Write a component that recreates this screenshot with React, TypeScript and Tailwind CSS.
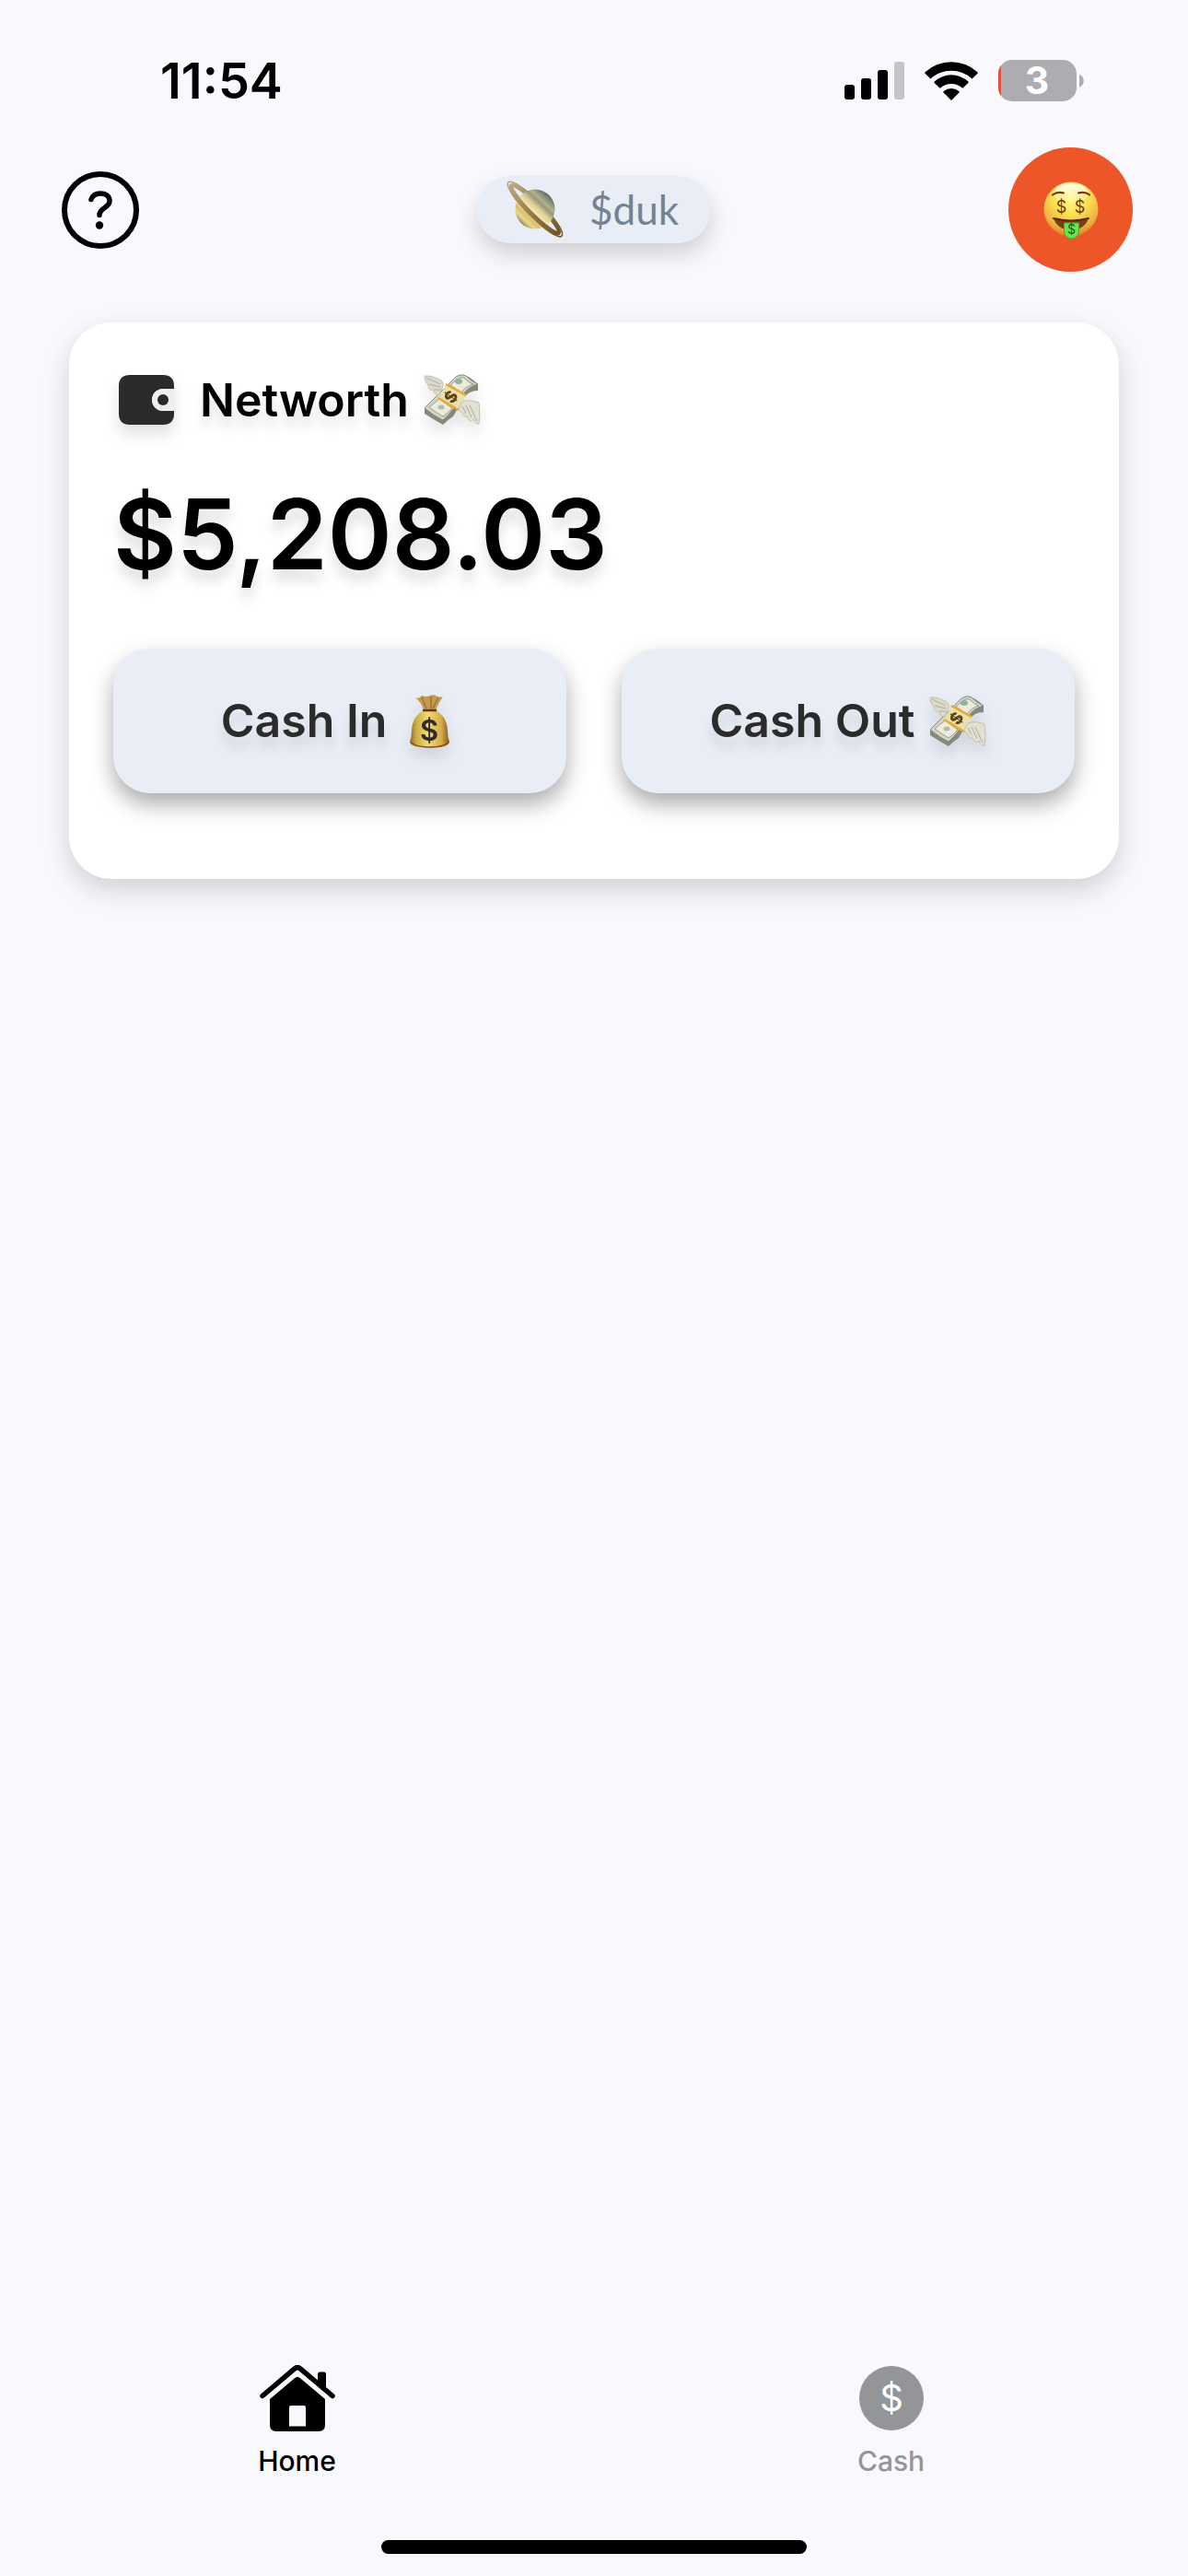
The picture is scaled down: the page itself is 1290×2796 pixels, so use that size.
import type { ReactNode } from 'react'

const tabs = [
  { id: 'home', label: 'Home', href: '#home', icon: <HomeIcon />, color: 'text-black' },
  { id: 'cash', label: 'Cash', href: '#cash', icon: <CashIcon />, color: 'text-[#949599]' },
]

function SignalIcon() {
  return (
    <svg className="h-[42px] w-[65px]" viewBox="0 0 65 42" aria-label="Signal">
      <rect x="0" y="25" width="11" height="16" rx="3" />
      <rect x="18" y="18" width="11" height="23" rx="3" />
      <rect x="36" y="9" width="11" height="32" rx="3" />
      <rect x="54" y="0" width="11" height="41" rx="3" fill="#c5c4ca" />
    </svg>
  )
}

function WifiIcon() {
  return (
    <svg className="h-[42px] w-[58px]" viewBox="0 0 58 42" aria-label="Wi-Fi">
      <path d="M6.500 18.500 L0.600 12.800 Q-0.200 12 0.600 11.200 A42 42 0 0 1 57.400 11.200 Q58.200 12 57.400 12.800 L51.500 18.500 A33 33 0 0 0 6.500 18.500Z" />
      <path d="M16.700 28.700 L10.600 23 Q10 22.200 10.700 21.500 A27 27 0 0 1 47.300 21.500 Q48 22.200 47.400 23 L41.300 28.700 A18.500 18.500 0 0 0 16.700 28.700Z" />
      <path d="M29 42 L20.600 33.600 Q20 32.800 20.700 32.100 A13 13 0 0 1 37.300 32.100 Q38 32.800 37.400 33.600Z" />
    </svg>
  )
}

function BatteryIcon() {
  return (
    <svg className="h-[46px] w-[94px] overflow-visible" viewBox="0 0 94 46" aria-label="Battery 3%">
      <defs>
        <clipPath id="battery-shell">
          <rect x="0" y="0" width="85" height="45" rx="15" />
        </clipPath>
      </defs>
      <g clipPath="url(#battery-shell)">
        <rect width="85" height="45" fill="#adacb1" />
        <rect width="3" height="45" fill="#eb4d3d" />
      </g>
      <path d="M88 16 A7.200 7.200 0 0 1 88 29.500Z" fill="#adacb1" />
      <text x="42" y="37" textAnchor="middle" fontSize="41" fontWeight="700" fill="#fff">3</text>
    </svg>
  )
}

function HelpIcon() {
  return (
    <svg className="size-[84px]" viewBox="0 0 84 84" fill="none" stroke="#000" strokeLinecap="round" strokeLinejoin="round">
      <circle cx="42" cy="42" r="39" strokeWidth="6" />
      <path d="M32 30.500 C33.500 26 37 24 42 24 C48.500 24 52 27.500 52 32 C52 40 41 39 41 47.500" strokeWidth="5.500" />
      <circle cx="41" cy="58.500" r="4.200" fill="#000" stroke="none" />
    </svg>
  )
}

function PlanetEmoji() {
  return (
    <svg className="size-[62px]" viewBox="0 0 62 62" aria-label="planet">
      <defs>
        <linearGradient id="planet" x1="0.900" y1="0.100" x2="0.150" y2="0.900">
          <stop offset="0" stopColor="#4d5650" />
          <stop offset="0.140" stopColor="#7f8778" />
          <stop offset="0.260" stopColor="#b5b187" />
          <stop offset="0.340" stopColor="#97997f" />
          <stop offset="0.460" stopColor="#dfd196" />
          <stop offset="0.620" stopColor="#f6ecb4" />
          <stop offset="0.760" stopColor="#dcbe68" />
          <stop offset="0.860" stopColor="#e9d78c" />
          <stop offset="1" stopColor="#827a4c" />
        </linearGradient>
        <linearGradient id="ring" x1="0" y1="0" x2="1" y2="0">
          <stop offset="0" stopColor="#baa97c" />
          <stop offset="0.500" stopColor="#927a46" />
          <stop offset="1" stopColor="#735628" />
        </linearGradient>
      </defs>
      <g transform="rotate(45 31 31)" fill="none" stroke="url(#ring)">
        <ellipse cx="31" cy="31" rx="41" ry="8.500" strokeWidth="1.500" />
        <ellipse cx="31" cy="31" rx="36.500" ry="6" strokeWidth="4" />
      </g>
      <circle cx="31" cy="31" r="21.500" fill="url(#planet)" />
      <g transform="rotate(45 31 31)" fill="none" stroke="url(#ring)">
        <path d="M-10 31 A41 8.500 0 0 0 72 31" strokeWidth="1.500" />
        <path d="M-5.500 31 A36.500 6 0 0 0 67.500 31" strokeWidth="4" />
      </g>
    </svg>
  )
}

function MoneyFaceEmoji() {
  return (
    <svg className="size-[62px]" viewBox="0 0 62 62" aria-label="money face">
      <defs>
        <radialGradient id="face" cx="0.500" cy="0.280" r="0.720">
          <stop offset="0" stopColor="#fff98a" />
          <stop offset="0.450" stopColor="#fbe150" />
          <stop offset="0.800" stopColor="#f0b040" />
          <stop offset="1" stopColor="#d98a24" />
        </radialGradient>
        <linearGradient id="shine" x1="0" y1="0" x2="0" y2="1">
          <stop offset="0" stopColor="#fffef0" />
          <stop offset="1" stopColor="#fffef0" stopOpacity="0" />
        </linearGradient>
      </defs>
      <circle cx="31" cy="30" r="29.500" fill="url(#face)" />
      <ellipse cx="31" cy="13" rx="19" ry="11" fill="url(#shine)" />
      <path d="M11 14.500 Q16 10.500 23 12.500 M39 12.500 Q46 10.500 51 14.500" fill="none" stroke="#6e3c0c" strokeWidth="2.200" strokeLinecap="round" />
      <path d="M12 40 Q31 45 50 40 Q46 52 31 53 Q16 52 12 40Z" fill="#7a3f12" />
      <path d="M12 40 Q31 45 50 40" fill="none" stroke="#5a2c08" strokeWidth="2" strokeLinecap="round" />
      <path d="M23.500 45 H39.500 V54 A8 8 0 0 1 23.500 54Z" fill="#6be352" stroke="#3fae2c" strokeWidth="1" />
      <g fill="#6e3c0c" textAnchor="middle">
        <text x="20.500" y="34" fontSize="18">$</text>
        <text x="40.500" y="34" fontSize="18">$</text>
        <text x="31.500" y="57" fontSize="14" fill="#1f5c1c">$</text>
      </g>
    </svg>
  )
}

function FlyingMoneyEmoji() {
  return (
    <svg className="h-[56px] w-[62px] shrink-0" viewBox="0 0 62 56" aria-label="money with wings">
      {/* bill stack */}
      <path d="M1 38 L40 1 Q48 0 59 11 V18 Q48 18 43 27 L32 46 Q27 49 21 55 Q12 50 1 43Z" fill="#85897d" />
      <path d="M1 37 L34 4 Q40 -1 46 2 Q52 8 59 11 Q48 14 43 22 L32 38 Q27 45 21 50 Q12 46 1 37Z" fill="#d3d5c6" stroke="#858a7c" strokeWidth="1" />
      <path d="M6 36 L17 27 L31 37 Q27 42 21 46 Q14 42 6 36Z M29 12 L36 6 Q41 2 45 5 Q48 9 54 11 Q46 13 41 20Z" fill="#ecebdc" stroke="#989d8d" strokeWidth="1" />
      <ellipse cx="38" cy="8" rx="4" ry="3" fill="#8eb49a" />
      <ellipse cx="19" cy="36" rx="3.500" ry="2.500" fill="#b5b9a8" />
      {/* band */}
      <path d="M24 12 L46 24 L38 39 L16 26Z" fill="#eadfae" />
      <path d="M24 11 L46 23 M16 26 L38 39" stroke="#e8ab28" strokeWidth="2.500" />
      <text x="30" y="31" fontSize="18" fontWeight="800" fill="#5e4312" textAnchor="middle" transform="rotate(-55 30 25)">$</text>
      {/* wings */}
      <path d="M1 2 Q8 1 15 5 Q22 7 21 13 Q19 18 17 23 Q11 22 11 18 Q5 18 5 12 Q1 9 1 2Z" fill="#dcdacd" stroke="#c2c0b2" strokeWidth="1" />
      <path d="M3 4 L18 11 M6 11 L18 14 M11 17 L18 17" stroke="#b0aea1" strokeWidth="1" />
      <path d="M42 30 Q50 27 60 31 Q62 42 60 54 Q56 55 54 49 Q51 54 47 46 Q43 47 42 42 Q38 40 38 37Z" fill="#e2e0d3" stroke="#c2c0b2" strokeWidth="1" />
      <path d="M50 34 L58 51 M46 34 L52 47 M42 35 L46 43" stroke="#b0aea1" strokeWidth="1" />
    </svg>
  )
}

function MoneyBagEmoji() {
  return (
    <svg className="h-[58px] w-[62px] shrink-0" viewBox="-9 0 62 58" aria-label="money bag">
      <defs>
        <linearGradient id="bag" x1="0" y1="0" x2="1" y2="0">
          <stop offset="0" stopColor="#8f6420" />
          <stop offset="0.150" stopColor="#caa843" />
          <stop offset="0.450" stopColor="#f0dc72" />
          <stop offset="0.800" stopColor="#d3ac48" />
          <stop offset="1" stopColor="#83561b" />
        </linearGradient>
      </defs>
      <path d="M6 3 Q10 5 13 1 Q18 3 22 1 Q27 -1 30 2 Q34 3 36 2 Q31 9 28 17 H15 Q13 9 6 3Z" fill="#c49a50" />
      <path d="M13 3 L18 15 M23 2 V15 M31 3 L25 15" stroke="#9a6c30" strokeWidth="1.200" />
      <path d="M15 17 H28 Q40 23 41 39 Q41 46 43 51 Q42 58 21.500 58 Q1 58 0 51 Q2 46 2 39 Q3 23 15 17Z" fill="url(#bag)" />
      <path d="M15 17 H28" stroke="#633512" strokeWidth="2.500" strokeLinecap="round" />
      <path d="M1 52 Q8 57 22 57 Q36 57 42 52" fill="none" stroke="#7a4a16" strokeWidth="1.500" />
      <text x="21" y="50" fontSize="31" fontWeight="600" fill="#33292b" textAnchor="middle">$</text>
    </svg>
  )
}

function WalletIcon() {
  return (
    <svg className="h-[54px] w-[60px] drop-shadow-[0_10px_8px_rgba(0,0,0,0.12)]" viewBox="0 0 60 54" aria-hidden="true">
      <path d="M12 0 H48 Q60 0 60 12 V15 H48 A12 12 0 0 0 48 39 H60 V42 Q60 54 48 54 H12 Q0 54 0 42 V12 Q0 0 12 0Z" fill="#2b2b2b" />
      <path d="M60 15 H48 A12 12 0 0 0 48 39 H60Z" fill="#efefef" />
      <circle cx="48" cy="27" r="6" fill="#2b2b2b" />
    </svg>
  )
}

function HomeIcon() {
  return (
    <svg className="h-[72px] w-[82px]" viewBox="0 0 82 72" aria-hidden="true">
      <path d="M3 33.500 L38 3.800 Q41 1.400 44 3.800 L79 33.500" fill="none" stroke="#000" strokeWidth="5.500" strokeLinecap="round" strokeLinejoin="round" />
      <path d="M63 20 V10 Q63 7.500 65.500 7.500 H69.500 Q72 7.500 72 10 V28Z" />
      <path fillRule="evenodd" d="M11 37 L38 14.200 Q41 11.800 44 14.200 L71 37 V65 Q71 72 64 72 H18 Q11 72 11 65Z M32 46 V66.500 H50 V46 Q50 44 48 44 H34 Q32 44 32 46Z" />
    </svg>
  )
}

function CashIcon() {
  return (
    <svg className="h-[72px] w-[70px]" viewBox="0 0 70 72" aria-hidden="true">
      <circle cx="35" cy="36" r="35" fill="#949599" />
      <text x="35" y="50" fontSize="40" fill="#fff" textAnchor="middle">$</text>
    </svg>
  )
}

function CashButton({ label, children }: { label: string; children: ReactNode }) {
  return (
    <button
      type="button"
      className="flex h-[157px] flex-1 items-center justify-center gap-4 rounded-[40px] bg-[#e9edf5] text-[50px] font-semibold text-[#2b2b2b] shadow-[0_12px_24px_rgba(0,0,0,0.33)]"
    >
      <span className="text-shadow-[0_12px_12px_rgba(0,0,0,0.1)]">{label}</span>
      <span className="drop-shadow-[0_10px_8px_rgba(0,0,0,0.1)]">{children}</span>
    </button>
  )
}

export default function App() {
  return (
    <div className="flex min-h-screen flex-col bg-[#f8f8fd] font-['Inter',sans-serif] text-black">
      {/* Status bar */}
      <div className="flex items-center justify-between pt-14 pr-[112px] pl-[174px]">
        <time className="text-[54px] leading-[64px] font-semibold">11:54</time>
        <div className="flex items-center gap-[22px]">
          <SignalIcon />
          <WifiIcon />
          <BatteryIcon />
        </div>
      </div>

      {/* Header */}
      <header className="mt-10 grid grid-cols-3 items-center px-[60px]">
        <button type="button" aria-label="Help" className="justify-self-start pl-[7px]">
          <HelpIcon />
        </button>
        <button
          type="button"
          className="flex h-[73px] w-[254px] items-center gap-7 justify-self-center rounded-full bg-[#e9edf5] pb-0.5 pl-8 font-['Lato',sans-serif] text-[44px] text-[#728494] shadow-[0_12px_24px_rgba(0,0,0,0.16)]"
        >
          <PlanetEmoji />
          $duk
        </button>
        <button
          type="button"
          aria-label="Profile"
          className="flex size-[135px] items-center justify-center justify-self-end rounded-full bg-[#ec5628]"
        >
          <MoneyFaceEmoji />
        </button>
      </header>

      <main className="flex-1 px-[75px] pt-[55px]">
        <section className="rounded-[46px] bg-white px-12 pt-[52px] pb-[93px] shadow-[0_12px_30px_rgba(0,0,0,0.16)]">
          <div className="flex items-center gap-7 pl-1.5">
            <WalletIcon />
            <h2 className="flex items-center gap-4 text-[50px] leading-[64px] font-semibold">
              <span className="text-shadow-[0_12px_12px_rgba(0,0,0,0.1)]">Networth</span>
              <span className="drop-shadow-[0_10px_8px_rgba(0,0,0,0.1)]">
                <FlyingMoneyEmoji />
              </span>
            </h2>
          </div>
          <p className="mt-12 text-[106px] leading-[132px] font-semibold text-shadow-[0_12px_14px_rgba(0,0,0,0.12)]">
            $5,208.03
          </p>
          <div className="mt-[58px] flex gap-[60px]">
            <CashButton label="Cash In">
              <MoneyBagEmoji />
            </CashButton>
            <CashButton label="Cash Out">
              <FlyingMoneyEmoji />
            </CashButton>
          </div>
        </section>
      </main>

      {/* Tab bar */}
      <nav className="grid grid-cols-2">
        {tabs.map((tab) => (
          <a key={tab.id} href={tab.href} className={`flex flex-col items-center gap-3 ${tab.color}`}>
            {tab.icon}
            <span className="text-[30px] leading-10 font-medium">{tab.label}</span>
          </a>
        ))}
      </nav>
      <div className="mx-auto mt-[66px] mb-6 h-[15px] w-[462px] rounded-full bg-black" />
    </div>
  )
}
